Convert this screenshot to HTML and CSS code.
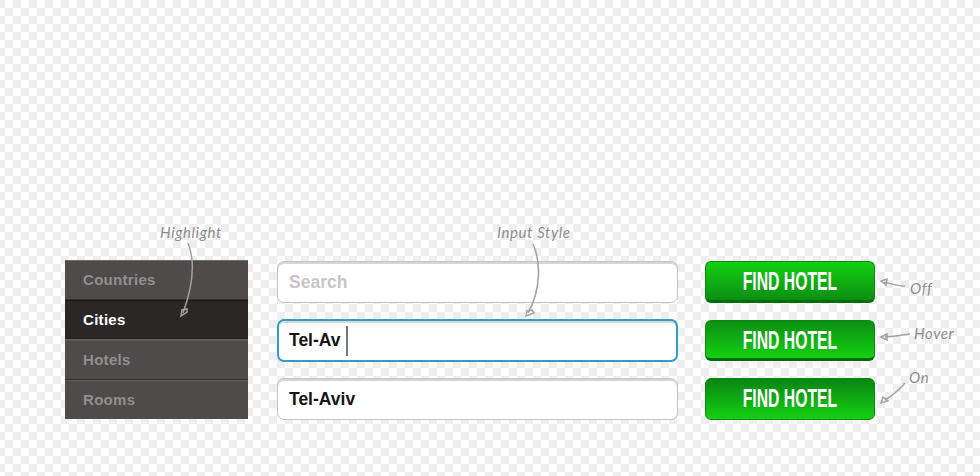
FILE: index.html
```html
<!DOCTYPE html>
<html lang="en">

<head>
    <meta charset="UTF-8">
    <title>Hotel search styles</title>
    <link rel="stylesheet" href="styles.css">
</head>

<body>
    <div class="board">
        <!-- Menu -->
        <ul class="menu">
            <li class="menu-item">Countries</li>
            <li class="menu-item active">Cities</li>
            <li class="menu-item">Hotels</li>
            <li class="menu-item">Rooms</li>
        </ul>

        <!-- Inputs -->
        <div class="fields">
            <div class="field placeholder">Search</div>
            <div class="field focus">Tel-Av<span class="caret"></span></div>
            <div class="field">Tel-Aviv</div>
        </div>

        <!-- Buttons -->
        <div class="buttons">
            <div class="btn off"><span class="btn-label">FIND HOTEL</span></div>
            <div class="btn hover"><span class="btn-label">FIND HOTEL</span></div>
            <div class="btn on"><span class="btn-label">FIND HOTEL</span></div>
        </div>
    </div>

    <!-- Notes -->
    <span class="note note-highlight">Highlight</span>
    <span class="note note-input">Input Style</span>
    <span class="note note-off">Off</span>
    <span class="note note-hover">Hover</span>
    <span class="note note-on">On</span>

    <svg class="arrows" width="980" height="476" viewBox="0 0 980 476">
        <path d="M188 243C194 258 195 280 183 313" />
        <path d="M181 316L182 310L187 309L187 312Z" />
        <path d="M533 244C541 262 541 290 528 313" />
        <path d="M526 316L527 311L532 310L534 313Z" />
        <path d="M905 286C898 286 892 284 884 282" />
        <path d="M881 281L887 279L886 285Z" />
        <path d="M910 334C901 335 893 337 885 337" />
        <path d="M881 337L887 334L887 340Z" />
        <path d="M905 383C898 391 892 396 885 400" />
        <path d="M881 403L883 397L888 401Z" />
    </svg>
</body>

</html>
```

FILE: styles.css
```css
html,
body {
    margin: 0;
    padding: 0;
}

body {
    width: 980px;
    height: 476px;
    overflow: hidden;
    position: relative;
    font-family: 'Liberation Sans', Arial, sans-serif;
    background-color: #fff;
    background-image: conic-gradient(#fff 25%, #eeeeee 0 50%, #fff 0 75%, #eeeeee 0);
    background-size: 16px 16px;
    background-position: -3px 0;
}

.board {
    display: flex;
    align-items: flex-start;
    padding: 260px 0 0 65px;
}

/* Menu */
.menu {
    list-style-type: none;
    margin: 0;
    padding: 0;
    width: 183px;
    height: 159px;
    flex-shrink: 0;
    overflow: hidden;
    background-color: #4d4a4a;
    border-top: 1px solid #6b6868;
    box-sizing: border-box;
}

.menu-item {
    height: 40px;
    box-sizing: border-box;
    padding-left: 18px;
    line-height: 40px;
    font-size: 15px;
    font-weight: bold;
    letter-spacing: 0.3px;
    color: #918f8f;
    background-color: #4e4b4b;
    border-bottom: 1px solid #353232;
    box-shadow: inset 0 1px 0 #5e5b5b;
}

.menu-item:first-child {
    box-shadow: none;
    height: 39px;
    line-height: 38px;
}

.menu-item.active {
    color: #fff;
    background-color: #2b2727;
    border-bottom: 1px solid #5e5b5b;
    box-shadow: inset 0 1px 0 #1f1c1c;
}

/* Inputs */
.fields {
    width: 401px;
    margin: 1px 0 0 29px;
    flex-shrink: 0;
}

.field {
    height: 42px;
    box-sizing: border-box;
    margin-bottom: 16px;
    padding-left: 11px;
    display: flex;
    align-items: center;
    background-color: #fff;
    border: 1px solid #c4c4c4;
    border-radius: 7px;
    box-shadow: inset 0 2px 0 #d6d6d6;
    font-size: 17.5px;
    font-weight: bold;
    color: #151515;
}

.field.placeholder {
    color: #c6c6c6;
}

.field.focus {
    height: 43px;
    border: 2px solid #2c9fca;
    padding-left: 10px;
}

.caret {
    width: 2px;
    height: 30px;
    margin-left: 5px;
    background-color: #777;
}

/* Buttons */
.buttons {
    width: 170px;
    margin: 1px 0 0 27px;
    flex-shrink: 0;
}

.btn {
    height: 42px;
    box-sizing: border-box;
    margin-bottom: 17px;
    text-align: center;
    line-height: 38px;
    font-size: 25px;
    font-weight: bold;
    color: #fff;
    border: 1px solid #0c8a0c;
    border-radius: 6px;
}

.btn-label {
    display: inline-block;
    transform: scaleX(0.63);
    white-space: nowrap;
}

.btn.off {
    background-image: linear-gradient(#14d012, #0b8f12);
    border-bottom: 3px solid #056a08;
}

.btn.hover {
    height: 41px;
    background-image: linear-gradient(#0b8f12, #14d012);
    border-bottom: 3px solid #056a08;
}

.btn.on {
    background-image: linear-gradient(#0a8512, #14d012);
}

/* Notes */
.note {
    position: absolute;
    font-family: 'Lato', sans-serif;
    font-style: italic;
    font-size: 15px;
    line-height: 18px;
    letter-spacing: 0.6px;
    color: #8d8d8d;
}

.note-highlight {
    left: 160px;
    top: 223px;
}

.note-input {
    left: 497px;
    top: 223px;
}

.note-off {
    left: 910px;
    top: 279px;
}

.note-hover {
    left: 914px;
    top: 324px;
}

.note-on {
    left: 909px;
    top: 368px;
}

.arrows {
    position: absolute;
    left: 0;
    top: 0;
    fill: none;
    stroke: #a2a2a2;
    stroke-width: 1.5;
}
```
